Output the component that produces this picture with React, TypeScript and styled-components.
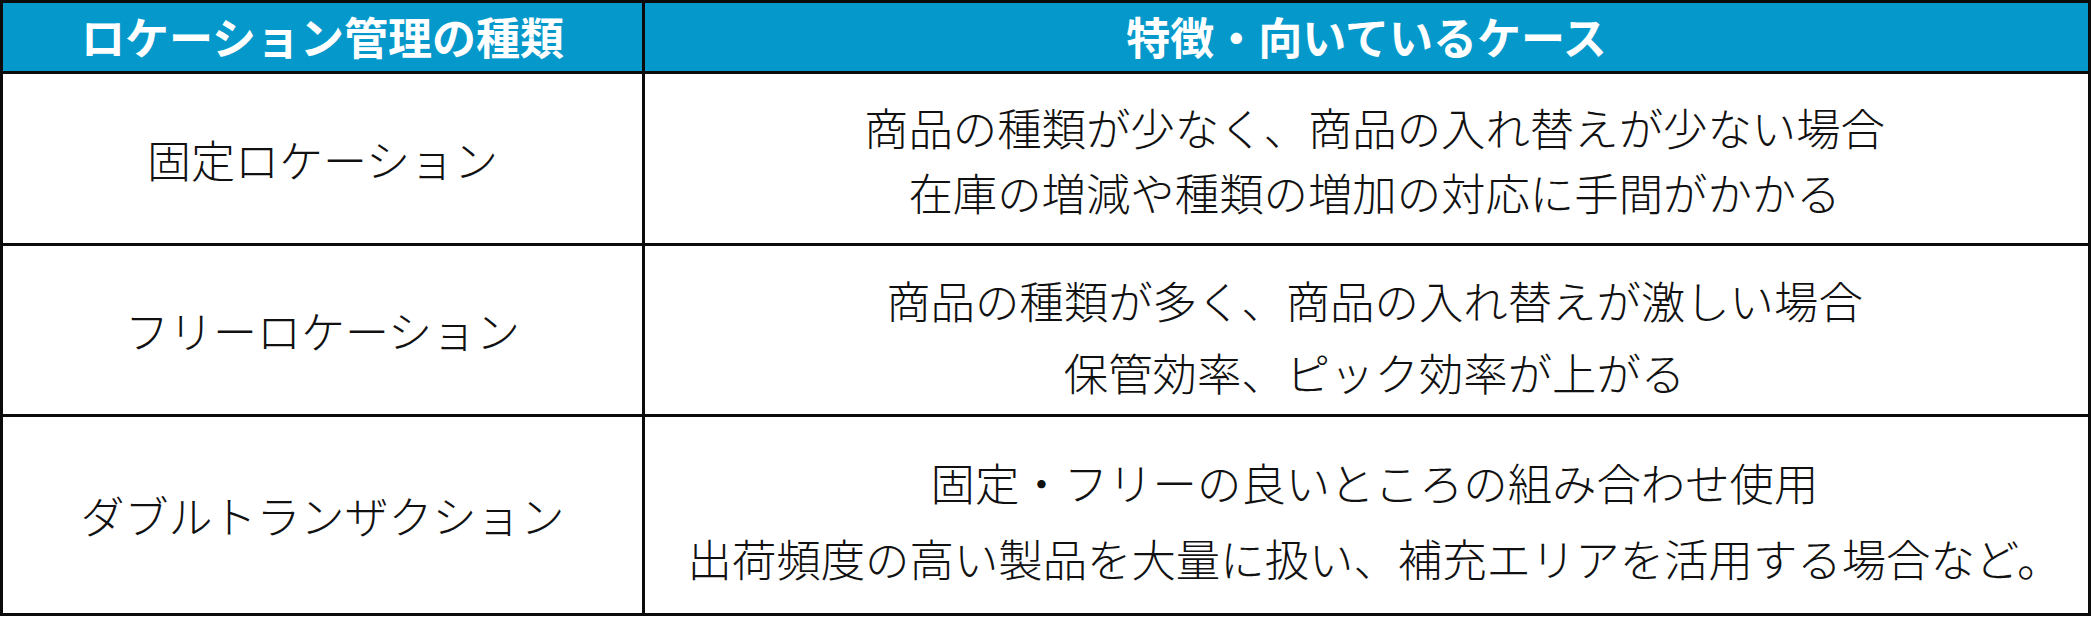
import React from "react";
import styled, { createGlobalStyle } from "styled-components";

const GlobalStyle = createGlobalStyle`
  html, body {
    margin: 0;
    padding: 0;
    background: #ffffff;
  }
  body {
    font-family: "Noto Sans CJK JP", "Noto Sans", sans-serif;
  }
`;

type Row = {
  name: string;
  lines: string[];
  gap: number;
  shift: number;
};

const rows: Row[] = [
  {
    name: "固定ロケーション",
    lines: [
      "商品の種類が少なく、商品の入れ替えが少ない場合",
      "在庫の増減や種類の増加の対応に手間がかかる",
    ],
    gap: 65,
    shift: 1,
  },
  {
    name: "フリーロケーション",
    lines: [
      "商品の種類が多く、商品の入れ替えが激しい場合",
      "保管効率、ピック効率が上がる",
    ],
    gap: 72,
    shift: 12,
  },
  {
    name: "ダブルトランザクション",
    lines: [
      "固定・フリーの良いところの組み合わせ使用",
      "出荷頻度の高い製品を大量に扱い、補充エリアを活用する場合など。",
    ],
    gap: 76,
    shift: 10,
  },
];

const Table = styled.div`
  width: 2091px;
  box-sizing: border-box;
  display: grid;
  grid-template-columns: 639px 1fr;
  grid-template-rows: 68px 169px 168px 196px;
  gap: 3px;
  padding: 3px;
  background: #0b0b0b;
`;

const HeaderCell = styled.div`
  background: #0599cb;
  color: #ffffff;
  font-size: 44px;
  font-weight: 700;
  display: flex;
  align-items: center;
  justify-content: center;
  padding-bottom: 2px;
`;

const NameCell = styled.div`
  background: #ffffff;
  color: #111111;
  font-size: 44px;
  font-weight: 200;
  display: flex;
  align-items: center;
  justify-content: center;
`;

const DescCell = styled.div<{ $gap: number; $shift: number }>`
  background: #ffffff;
  color: #111111;
  font-size: 44.4px;
  font-weight: 200;
  display: flex;
  flex-direction: column;
  align-items: center;
  justify-content: center;
  padding-top: ${(p) => p.$shift}px;
  padding-left: 16px;
  line-height: ${(p) => p.$gap}px;
`;

const Line = styled.span`
  white-space: nowrap;
`;

export default function App() {
  return (
    <>
      <GlobalStyle />
      <Table>
        <HeaderCell>ロケーション管理の種類</HeaderCell>
        <HeaderCell>特徴・向いているケース</HeaderCell>
        {rows.map((r) => (
          <React.Fragment key={r.name}>
            <NameCell>{r.name}</NameCell>
            <DescCell $gap={r.gap} $shift={r.shift}>
              {r.lines.map((l) => (
                <Line key={l}>{l}</Line>
              ))}
            </DescCell>
          </React.Fragment>
        ))}
      </Table>
    </>
  );
}
